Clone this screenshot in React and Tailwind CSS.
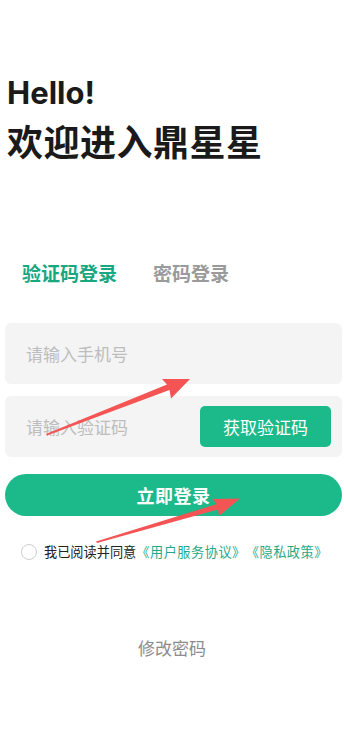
import React from "react";

export default function App() {
  const cjk = { fontFamily: '"Noto Sans CJK SC", "Noto Sans", sans-serif' };
  return (
    <div className="relative w-[344px] h-[739px] bg-white overflow-hidden [text-spacing-trim:space-all]" style={cjk}>
      <div className="pt-[75px] px-[7px]">
        <div className="text-[31px] leading-[36px] font-bold text-[#1a1a1a]" style={{ fontFamily: 'Inter, "Noto Sans", sans-serif' }}>
          Hello!
        </div>
        <div className="mt-[7px] text-[36px] leading-[44px] font-bold text-[#1a1a1a] tracking-[0.5px]">欢迎进入鼎星星</div>
      </div>

      <div className="mt-[99px] pl-[22px] flex items-center gap-[36px] text-[19px] leading-[24px] font-bold">
        <span className="text-[#18a77f]">验证码登录</span>
        <span className="text-[#9a9a9a]">密码登录</span>
      </div>

      <div className="mt-[38px] pl-[5px] pr-[2px] flex flex-col">
        <div className="h-[61px] rounded-[6px] bg-[#f4f4f4] flex items-center pl-[21px] text-[17px] text-[#bdbdbd]">
          请输入手机号
        </div>
        <div className="mt-[12px] h-[61px] rounded-[6px] bg-[#f4f4f4] flex items-center justify-between pl-[21px] pr-[11px] text-[17px]">
          <span className="text-[#bdbdbd]">请输入验证码</span>
          <div className="w-[131px] h-[41px] rounded-[5px] bg-[#1cb98a] text-white flex items-center justify-center text-[17px]">
            获取验证码
          </div>
        </div>
        <div className="mt-[17px] h-[42px] rounded-full bg-[#1cb98a] text-white flex items-center justify-center text-[18px] font-bold tracking-[0.5px]">
          立即登录
        </div>
        <div className="mt-[27px] pl-[16px] flex items-center text-[13.2px] leading-[18px]">
          <span className="w-[16px] h-[16px] rounded-full border border-[#cfcfcf] mr-[7px]"></span>
          <span className="text-[#222]">我已阅读并同意</span>
          <span className="text-[#1fa98a] tracking-[0.5px]">《用户服务协议》《隐私政策》</span>
        </div>
      </div>

      <div className="mt-[74px] text-center text-[17px] text-[#8c8c8c]">修改密码</div>

      <svg className="absolute left-0 top-0 pointer-events-none" width="344" height="739" viewBox="0 0 344 739">
        <polygon fill="#f45454" points="46,434 167,384.5 162,379 190,379 171,398.5 169.5,390 47,435.5" />
        <polygon fill="#f45454" points="96,541.5 217,504 212,499 240,498.5 219,516 218,509.5 97,543" />
      </svg>
    </div>
  );
}
